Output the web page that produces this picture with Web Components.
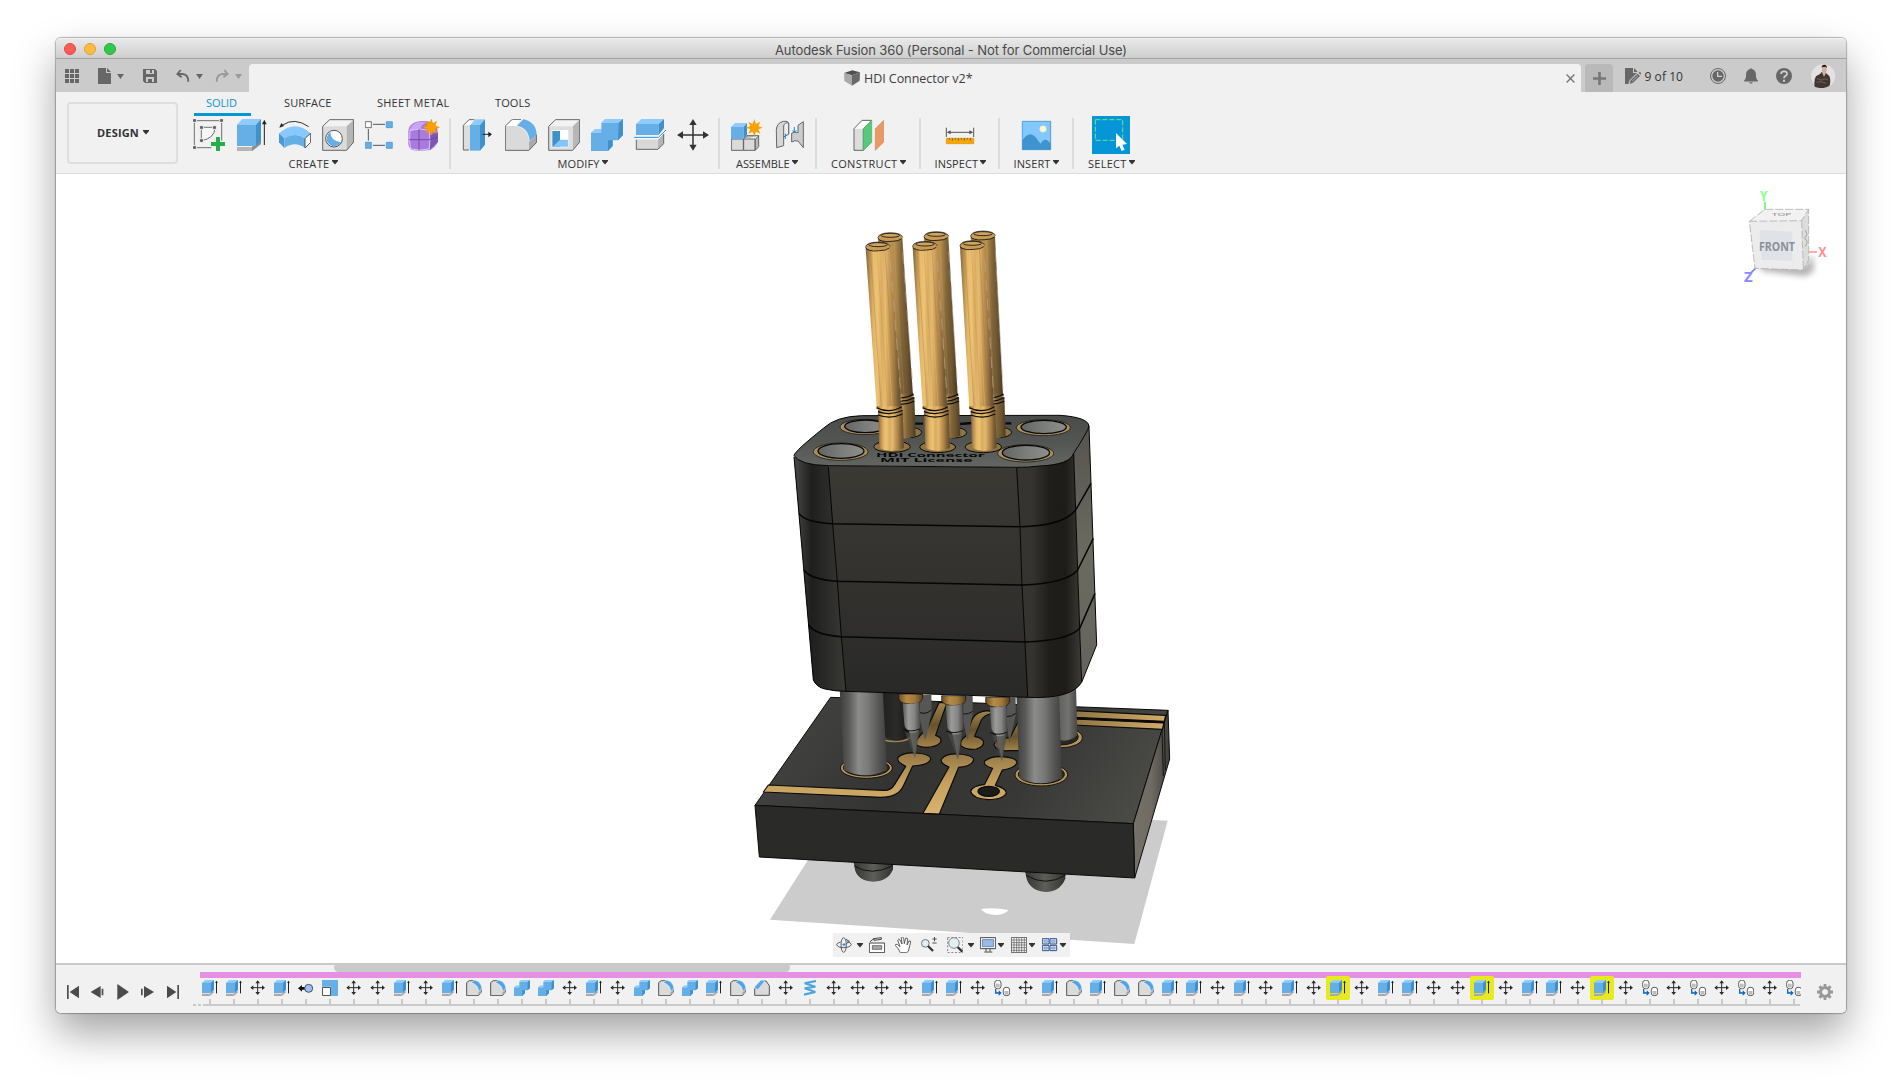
<!DOCTYPE html>
<html lang="en">
<head>
<meta charset="utf-8">
<title>Autodesk Fusion 360</title>
<style>
html,body{margin:0;height:100%;background:#fff;overflow:hidden}
body{font-family:"Open Sans","Noto Sans",sans-serif;font-size:11px;color:#333}
</style>
</head>
<body>
<fusion-app></fusion-app>
<script>
// Each icon: viewBox, width, height, markup.
const G='fill="#676767"', O='stroke="#666" stroke-width="3" stroke-linejoin="round"';
const ICONS={
 caret:['0 0 7 5',7,5,'<path d="M0 0h7L3.5 5z" fill="currentColor"/>'],
 caret6:['0 0 6 5',6,5,'<path d="M0 0h6v1L3 4.500 0 1z" fill="#333"/>'],
 apps:['75 132 42 42',14,14,`<path ${G} d="M75 132h12v12H75zM90 132h12v12H90zM105 132h12v12h-12zM75 147h12v12H75zM90 147h12v12H90zM105 147h12v12h-12zM75 162h12v12H75zM90 162h12v12H90zM105 162h12v12h-12z"/>`],
 file:['174 129 39 48',13,16,`<path ${G} d="M174 129h24v15h15v33h-39zM201 129l12 12h-12z"/>`],
 save:['309 132 42 42',14,14,`<path ${G} fill-rule="evenodd" d="M309 132h36l6 6v36h-36l-6-6zM318 135v12h24v-12h-6v9h-6v-9zM318 156v15h6v-9h12v9h6v-15z"/>`],
 undo:['408 133 42 40',14,13.3,'<path d="M422 136l-10 12 13 10M413 148h14q18 1 18 23" fill="none" stroke="#676767" stroke-width="5.5"/>'],
 redo:['526 133 42 40',14,13.3,'<path d="M554 136l10 12-13 10M563 148h-14q-18 1-18 23" fill="none" stroke="#999" stroke-width="5.5"/>'],
 cube:['162 119 48 48',16,16,'<path d="M162 128l25-8 23 6-24 9z" fill="#4f4f4f"/><path d="M162 128l24 7v31l-23-14z" fill="#aaa"/><path d="M186 135l24-9-1 25-23 15z" fill="#696969"/>'],
 close:['0 0 9 9',9,9,'<path d="M.6.6l7.8 7.8M8.4.6L.6 8.4" stroke="#777" stroke-width="1.400"/>'],
 plus:['0 0 13 13',13,13,'<path d="M6.5 0v13M0 6.5h13" stroke="#777" stroke-width="2.6"/>'],
 docedit:['255 114 48 48',16,16,`<path ${G} d="M255 114h24v15h12l-22 21-4 12h-10zM282 114l11 12h-11zM272 151l21-20 7 7-21 20-10 4zM296 128l4-3 4 5-3 4z"/><path d="M276 154l18-17" stroke="#cbcbcb" stroke-width="2"/>`],
 clock:['510 114 48 48',16,16,`<circle cx="534" cy="138" r="22.5" fill="none" stroke="#676767" stroke-width="3"/><circle cx="534" cy="138" r="17" ${G}/><path d="M533 126v13h13" fill="none" stroke="#d0d0d0" stroke-width="4"/>`],
 bell:['612 113 42 49',14,16,`<path ${G} d="M630 116q3-5 6 0 12 3 12 17 0 14 6 18v3h-42v-3q6-4 6-18 0-14 12-17zM627 157h12q-6 8-12 0z"/>`],
 help:['708 114 48 48',16,16,`<circle cx="732" cy="138" r="24" ${G}/><path d="M723 132q1-9 10-8 9 1 8 8-1 4-5 6-4 2-4 7" fill="none" stroke="#d2d2d2" stroke-width="5"/><path d="M729 149h6v6h-6z" fill="#d2d2d2"/>`],
 avatar:['812 102 73 73',24.3,24.3,'<circle cx="848.500" cy="138.500" r="36" fill="#e2e2e2"/><path d="M823 170q-3-20 4-31l13-8 4-5h12l3 5 8 7q6 16 0 30-21 12-44 2z" fill="#403734"/><path d="M845 126l6 14 6-12v-8h-11z" fill="#c9c2bd"/><path d="M830 146l12 4 12-4 9 4M828 157l14-2 16 5" stroke="#66544c" stroke-width="4" fill="none"/><path d="M845 114q0-6 7-6 7 0 7 6v9q-4 7-7 7-5-1-7-7z" fill="#d8ab93"/><path d="M844 114q-1-9 8-10 8 1 8 9l-5-3-9 1z" fill="#1d1817"/>'],
 sketch:['459 282 96 96',32,32,'<path d="M463 287h82v60M463 287v81h51" fill="none" stroke="#555" stroke-width="2.500"/><path d="M484 307h41q0 33-41 40z" fill="#f6f6f6" stroke="#555" stroke-width="2.500"/><path d="M458 281h11v11h-11zM539 281h11v11h-11zM458 362h11v11h-11zM479 302h11v11h-11zM518 302h11v11h-11zM479 341h11v11h-11z" fill="#555" stroke="#f1f1f1" stroke-width="3"/><path d="M528 336h12v15h15v12h-15v15h-12v-15h-15v-12h15z" fill="#23ad4c"/>'],
 extrude:['588 282 96 96',32,32,'<path d="M591 366h45l27-22v13l-27 21h-45z" fill="#b5b5b5"/><path d="M636 366l27-22v13l-27 21z" fill="#8e8e8e"/><path d="M591 299l16-17h56l-15 17z" fill="#8fcbff"/><path d="M591 299h57v64h-57z" fill="#65aee6"/><path d="M648 299l15-17v66l-15 15z" fill="#4090cc"/><path d="M673 290v70" stroke="#222" stroke-width="3"/><path d="M666 298l7-14 7 14z" fill="#222"/>'],
 revolve:['717 282 96 96',32,32,'<path d="M717 325q48-43 95 0l-17 15q-30-20-62 0z" fill="#87c9ff"/><path d="M717 325l16 15v29l-16-17z" fill="#4b98d2"/><path d="M733 340q32-20 62 0v29q-30-22-62 0z" fill="#65aee6"/><path d="M795 340l17-15v27l-17 17z" fill="#fff" stroke="#555" stroke-width="3"/><path d="M728 300q36-24 78 5" fill="none" stroke="#333" stroke-width="3"/><path d="M718 308l6-14 8 9z" fill="#222"/>'],
 hole:['846 282 96 96',32,32,`<path d="M848 304l21-20h72l-21 20z" fill="#f2f2f2"/><path d="M848 304h72v72h-72z" fill="#dadada"/><path d="M920 304l21-20v67l-21 25z" fill="#b5b5b5"/><path d="M848 304l21-20h72v67l-21 25h-72z" fill="none" ${O}/><circle cx="882" cy="341" r="25" fill="#fff" stroke="#555" stroke-width="3"/><path d="M871 321q0 26 32 31a23 23 0 1 1-32-31z" fill="#65aee6"/>`],
 pattern:['975 282 96 96',32,32,'<path d="M999 298h36M985 312v35M999 361h36" stroke="#555" stroke-width="3"/><path d="M976 290h18v18h-18z" fill="#fff" stroke="#555" stroke-width="2.500"/><path d="M1039 290h18v18h-18zM976 352h18v18h-18zM1039 352h18v18h-18z" fill="#65b0ea" stroke="#3e8dc8" stroke-width="2"/>'],
 form:['1104 282 96 96',32,32,'<path d="M1105 318q0-16 20-26 24-8 50 0 18 12 18 28v32q-6 14-22 23-34 5-56 0-10-8-10-20z" fill="#a97be0"/><path d="M1108 318q4-20 26-27l30 1q-20 5-22 18z" fill="#c9a5f5"/><path d="M1168 330l26-8v28l-24 24z" fill="#7d55b5"/><path d="M1110 316q28-8 58 0 3 30 0 56-28 6-56 0-6-26-2-56z" fill="none" stroke="#dcc4fa" stroke-width="3"/><path d="M1137 313v62M1107 344h60l26-8" fill="none" stroke="#68438f" stroke-width="2.500"/><path d="M1174 283l4 13 12-7-5 13 13 5-13 5 5 13-12-6-4 12-5-12-12 6 5-13-13-5 13-5-5-13 12 6z" fill="#faa100" stroke="#e58c00" stroke-width="1.500"/>'],
 press:['66 102 96 96',32,32,`<path d="M70 121l17-17h20v90H70z" fill="#ddd"/><path d="M70 121l17-17h18l-14 17z" fill="#fafafa"/><path d="M87 195H70v-74l17-17h16" fill="none" ${O}/><path d="M91 120l15-17h29l-15 17z" fill="#8fcbff"/><path d="M90 120h30v77H90z" fill="#65aee6"/><path d="M120 120l15-17v76l-15 18z" fill="#4090cc"/><path d="M128 148h20" stroke="#222" stroke-width="3"/><path d="M145 140l11 8-11 9z" fill="#222"/>`],
 fillet:['195 102 96 96',32,32,`<path d="M196 123l21-20h26l-16 20z" fill="#fff"/><path d="M196 123h30q39 8 41 48v25h-71z" fill="#dadada"/><path d="M267 170l23-21v23l-23 24z" fill="#aaa"/><path d="M196 123l21-20h26M290 149v23l-23 24h-71v-73" fill="none" ${O}/><path d="M231 122l19-19q39 8 40 47l-21 18q-3-39-38-46z" fill="#65aee6"/>`],
 shell:['324 102 96 96',32,32,`<path d="M326 124l21-20h72v67l-21 25h-72z" fill="#f3f3f3"/><path d="M398 124l21-20v67l-21 25z" fill="#b7b7b7"/><path d="M326 124h72v72h-72z" fill="#ddd"/><path d="M335 135h50v52h-50z" fill="#fff"/><path d="M337 138h23v47h-23z" fill="#4090cc"/><path d="M360 164h24v21h-46z" fill="#82c6ff"/><path d="M326 124l21-20h72v67l-21 25h-72z" fill="none" ${O}/>`],
 combine:['453 102 96 96',32,32,'<path d="M484 114l12-12h53v48l-15 16h-16v17l-14 15h-51v-54l13-12h18z" fill="#65aee6"/><path d="M484 114l12-12h53l-13 12zM453 144l13-12h18v12z" fill="#8fcbff"/><path d="M536 114l13-12v48l-15 16zM504 166h14v17l-14 15z" fill="#4090cc"/>'],
 split:['582 102 96 96',32,32,`<path d="M588 117l16-15h68l-16 15z" fill="#8fcbff"/><path d="M588 117h68v33h-68z" fill="#65aee6"/><path d="M656 117l16-15v27l-16 21z" fill="#4090cc"/><path d="M589 164h65v29h-65z" fill="#d8d8d8"/><path d="M654 164l17-20v32l-17 17z" fill="#b5b5b5"/><path d="M589 164v29h65l17-17v-32" fill="none" ${O}/><path d="M582 157h73l23-22" fill="none" stroke="#fff" stroke-width="7"/><path d="M582 157h73l23-22" fill="none" stroke="#1790e8" stroke-width="3"/>`],
 move:['711 102 96 96',32,32,'<path d="M759 114v72M722 150h74" stroke="#333" stroke-width="4.500"/><path d="M759 102l11 18h-22zM759 197l11-18h-22zM711 150l18-11v22zM807 150l-18-11v22z" fill="#333"/>'],
 assemble:['873 102 96 96',32,32,`<path d="M874 162h36v34h-36zM911 162h34v34h-34z" fill="#dadada" ${O}/><path d="M911 162l10-10h35l-10 11v33l10-11v-33" fill="#bbb" ${O}/><path d="M873 126l12-12h36l-10 12z" fill="#8fcbff"/><path d="M873 126h38v36h-38z" fill="#65aee6"/><path d="M911 126l10-12v36l-10 12z" fill="#4090cc"/><path d="M943 102l5 15 13-7-6 13 13 5-13 5 6 13-13-6-5 13-5-13-13 6 6-13-13-5 13-5-6-13 13 7z" fill="#faa100"/>`],
 joint:['1002 102 96 96',32,32,`<path d="M1009 136q0-22 21-27 14-2 16 5v33l-15 9v26l-21 6z" fill="#d6d6d6" ${O}/><path d="M1031 156v-33q3-12 15-9v33z" fill="#eee" ${O}/><path d="M1036 146v16" stroke="#1790e8" stroke-width="3"/><path d="M1055 145q8-7 19-2v-22l16-11v78l-16-20q-9-3-19 3z" fill="#ccc" ${O}/><path d="M1063 126v18M1058 136l5 8 5-8" fill="none" stroke="#1790e8" stroke-width="3"/>`],
 construct:['186 264 96 96',32,32,`<path d="M192 293l24-25h28l-24 25v65h-28z" fill="#ddd" ${O}/><path d="M194 293l23-23h24l-22 23z" fill="#fff"/><path d="M220 293l25-25v66l-25 25z" fill="#5ac87c" stroke="#46b268" stroke-width="2"/><path d="M256 293l25-25v65l-25 25z" fill="#e79a66" stroke="#d6854c" stroke-width="2"/>`],
 inspect:['462 264 96 96',32,32,'<path d="M469 290v28M551 290v28M475 304h70" stroke="#555" stroke-width="3"/><path d="M470 304l12-6v12zM550 304l-12-6v12z" fill="#555"/><path d="M469 322h82v16h-82z" fill="#faa500" stroke="#e18c00" stroke-width="2"/><path d="M478 321v5M487 321v8M496 321v5M505 321v8M514 321v5M523 321v8M532 321v5M541 321v8" stroke="#555" stroke-width="2.500"/>'],
 insert:['690 264 96 96',32,32,'<path d="M697 271h85v85h-85z" fill="#82c8ff" stroke="#3f94d0" stroke-width="2.500"/><path d="M697 328q25-38 48 2l7 8q13-24 30 0v18h-85z" fill="#3f94d0"/><circle cx="759" cy="294" r="10" fill="#fffbd0" stroke="#e5d8a0" stroke-width="1.500"/>'],
 select:['906 258 114 114',38,38,'<path d="M906 258h114v114H906z" fill="#0696d7"/><path d="M916 269h82v62h-82z" fill="none" stroke="#6fe389" stroke-width="3" stroke-dasharray="15 6"/><path d="M978 309v46l10-8 7 16 9-4-7-15 14-2z" fill="#fff"/>'],
 start:['81 90 36 42',12,14,'<path d="M81 90h5v42h-5zM117 92v38l-28-19z" fill="#4b4b4b"/>'],
 prev:['154 90 39 42',13,14,'<path d="M183 93v36l-30-18zM186 101h5v20h-5z" fill="#4b4b4b"/>'],
 play:['230 87 37 48',12.3,16,'<path d="M231 87v48l35-24z" fill="#4b4b4b"/>'],
 next:['303 90 39 42',13,14,'<path d="M312 93v36l30-18zM303 101h5v20h-5z" fill="#4b4b4b"/>'],
 end:['381 90 36 42',12,14,'<path d="M412 90h5v42h-5zM381 92v38l28-19z" fill="#4b4b4b"/>'],
 gear:['0 0 16 16',16,16,'<path fill="#999" fill-rule="evenodd" d="M6.6 0h2.800v2.200l1.600.6 1.600-1.500 2 2-1.500 1.600.7 1.700H16v2.800h-2.200l-.7 1.700 1.500 1.600-2 2-1.600-1.500-1.600.6V16H6.600v-2.200L5 13.200l-1.600 1.500-2-2 1.500-1.600-.7-1.700H0V6.600h2.200l.7-1.700-1.500-1.600 2-2L5 2.800l1.600-.6zM8 5a3 3 0 1 0 .01 0z"/>'],
 // Timeline features, 16px.
 E:['486 75 48 48',16,16,'<path d="M486 116h24l11-9v6l-12 10h-23z" fill="#aaa"/><path d="M486 84l9-9h27l-8 9z" fill="#90ceff"/><path d="M486 83h28v31h-28z" fill="#65aee6"/><path d="M513 83l9-8v30l-9 9z" fill="#3f8fcb"/><path d="M529.500 80v35" stroke="#222" stroke-width="3"/><path d="M525 83l4.500-6 4.500 6z" fill="#222"/>'],
 M:['630 75 48 48',16,16,'<path d="M653 80v36M635 98h36" stroke="#2a2a2a" stroke-width="3"/><path d="M653 76l7 9h-14zM653 120l7-9h-14zM631 98l9-7v14zM675 98l-9-7v14z" fill="#2a2a2a"/>'],
 A:['774 76 48 48',16,16,'<path d="M774 101l12-10v6h10v8h-10v6z" fill="#111"/><circle cx="806" cy="101" r="12" fill="#9fc0ea" stroke="#3e4d7c" stroke-width="3"/>'],
 S:['846 75 48 48',16,16,'<path d="M846 75h48v48h-21V95h-27z" fill="#65b0e8"/><path d="M847.500 97.500h24v24h-24z" fill="#fff" stroke="#555" stroke-width="3"/>'],
 F:['1278 75 48 48',16,16,'<path d="M1280 83l8-6h15q20 6 21 24v10l-9 11h-35z" fill="#dadada" stroke="#555" stroke-width="3"/><path d="M1315 108l9-7v10l-9 10z" fill="#aaa"/><path d="M1293 83l10-8q21 4 23 26l-10 9q-2-22-23-27z" fill="#4fa5e4" stroke="#fff" stroke-width="2"/>'],
 H:['762 75 48 48',16,16,'<path d="M764 102l20-24h14l10 14v29h-44z" fill="#dadada" stroke="#555" stroke-width="3" stroke-linejoin="round"/><path d="M763 96l20-21 12 3-22 27z" fill="#55a9e8" stroke="#fff" stroke-width="1.500"/>'],
 C:['42 75 48 48',16,16,'<path d="M58 81l6-6h26v24l-7 7h-8v8l-8 9H42V98l6-6h10z" fill="#65aee6"/><path d="M58 81l6-6h26l-6 6zM42 98l6-6h10v6z" fill="#90ceff"/><path d="M83 81l7-6v24l-7 7zM67 106h8v8l-8 9z" fill="#3f8fcb"/>'],
 W:['906 75 48 48',16,16,'<path d="M948 78l-34 7 32 10-32 5 32 11-34 8" fill="none" stroke="#4da5e0" stroke-width="6.500" stroke-linejoin="bevel"/>'],
 J:['102 75 48 48',16,16,'<rect x="104" y="76" width="19" height="25" rx="8" fill="#fff" stroke="#444" stroke-width="2.500"/><path d="M108 86h11v11h-11z" fill="#bbb"/><rect x="130" y="97" width="19" height="25" rx="8" fill="#fff" stroke="#444" stroke-width="2.500"/><path d="M134 108h11v11h-11z" fill="#bbb"/><path d="M107 102v12h10" fill="none" stroke="#0a63bd" stroke-width="4"/><path d="M116 106l9 8-9 8z" fill="#0a63bd"/>'],
 // Navigation bar.
 orbit:['288 831 48 48',16,16,'<ellipse cx="311" cy="855" rx="8" ry="22" fill="none" stroke="#444" stroke-width="2.500"/><path d="M302 846q-12 3-12 8 3 9 21 9 20-1 23-9-1-6-12-9" fill="none" stroke="#444" stroke-width="2.500"/><path d="M318 838l10 6-9 7" fill="none" stroke="#444" stroke-width="3"/><path d="M307 854h10M312 849v10" stroke="#1283e8" stroke-width="3"/>'],
 look:['387 831 48 48',16,16,'<path d="M388 849h46v29h-46z" fill="#fff" stroke="#444" stroke-width="3"/><path d="M397 857h28v11h-28z" fill="#aaa" stroke="#444" stroke-width="2"/><path d="M390 845l12-9v5l22-3v-5l-24 3" fill="none" stroke="#444" stroke-width="3"/>'],
 pan:['465 831 48 48',16,16,'<path d="M481 878q-5-12-15-22 0-6 7-2l7 6-7-20q3-6 7 0l6 12-2-19q4-5 7 1l2 17 4-16q5-3 6 2l-2 18 6-12q5-2 5 3l-7 28-5 4z" fill="#fff" stroke="#444" stroke-width="2.500" stroke-linejoin="round"/>'],
 zoom:['543 831 48 48',16,16,'<circle cx="556" cy="850" r="11.500" fill="#dff0f4" stroke="#777" stroke-width="3"/><path d="M564 858l15 15" stroke="#333" stroke-width="7"/><path d="M577 837h13M583.500 831v13M577 849h13" stroke="#333" stroke-width="2.500"/>'],
 fit:['620 831 50 48',16.6,16,'<path d="M622 832h46v46h-46z" fill="none" stroke="#666" stroke-width="2.500" stroke-dasharray="6 5"/><circle cx="641" cy="849" r="16" fill="#dff0f4" stroke="#888" stroke-width="3"/><path d="M652 861l14 14" stroke="#333" stroke-width="7"/>'],
 display:['720 831 48 48',16,16,'<path d="M721 833h46v33h-46z" fill="#fff" stroke="#444" stroke-width="3"/><path d="M727 839h34v21h-34z" fill="#9bbbe4" stroke="#39629b" stroke-width="2"/><path d="M738 867v7M750 867v7M733 876h24" stroke="#444" stroke-width="3"/>'],
 grid:['813 831 48 48',16,16,'<path d="M814 832h46v46h-46z" fill="#f8f8f8" stroke="#444" stroke-width="2.500"/><path d="M822 832v46M830 832v46M837 832v46M845 832v46M853 832v46M814 840h46M814 848h46M814 855h46M814 863h46M814 871h46" stroke="#555" stroke-width="2"/>'],
 views:['906 831 48 48',16,16,'<path d="M907 836h20v16h-20zM930 836h20v16h-20zM907 856h20v16h-20zM930 856h20v16h-20z" fill="#d6e5f8" stroke="#33568c" stroke-width="3"/><path d="M912 841h10v6h-10zM935 841h10v6h-10zM912 861h10v6h-10zM935 861h10v6h-10z" fill="#b3cdec" stroke="#7193bf" stroke-width="2"/>']
};
const define=(n,html,after)=>customElements.define(n,class extends HTMLElement{
 connectedCallback(){ if(this.shadowRoot)return;
  this.attachShadow({mode:'open'}).innerHTML=typeof html==='function'?html(this):html; after&&after(this);}
});
define('f-icon',el=>{const [vb,w,h,m]=ICONS[el.getAttribute('n')];
 return `<style>:host{display:block;flex:none;width:${w}px;height:${h}px}svg{display:block}</style><svg width="${w}" height="${h}" viewBox="${vb}">${m}</svg>`});
// Text whose tracking is adjusted to a given run width.
define('fit-text','<style>:host{display:block;white-space:nowrap;flex:none}span{display:inline-block}</style><span><slot></slot></span>',el=>{
 const s=el.shadowRoot.querySelector('span'),w=+el.getAttribute('w'),n=el.textContent.length;
 s.style.letterSpacing=((w-s.getBoundingClientRect().width)/n).toFixed(3)+'px'; el.style.width=w+'px';});

define('title-bar',`<style>:host{display:flex;height:21px;box-sizing:border-box;align-items:center;background:linear-gradient(#e8e8e8,#cfcfcf);border-top:1px solid #f3f3f3;border-bottom:1px solid #a2a2a2;font:13px Inter,sans-serif;color:#484848;border-radius:5px 5px 0 0}
.l{display:flex;gap:8px;padding-left:8px;width:711px}i{width:12px;height:12px;border-radius:50%;box-sizing:border-box;border:1px solid}fit-text{padding-top:2px}</style>
<div class="l"><i style="background:#fc5b57;border-color:#e2463f"></i><i style="background:#fdbc40;border-color:#e0a033"></i><i style="background:#34c84a;border-color:#27a934"></i></div>
<fit-text w="352">Autodesk Fusion 360 (Personal - Not for Commercial Use)</fit-text>`);

define('tab-bar',`<style>:host{display:flex;height:33px;background:#cbcbcb;align-items:flex-end}
.l{display:flex;width:193px;height:32px;align-items:center;color:#676767;box-sizing:border-box;padding:0 0 0 9px}
.t{height:28px;width:1332px;background:#f1f1f1;border-radius:4px 4px 0 0;display:flex;align-items:center;box-sizing:border-box;padding:0 6px 0 595px;font-size:12.500px;color:#3c3c3c}
.p{height:28px;width:28px;margin-left:4px;background:#b9b9b9;border-radius:4px 4px 0 0;display:grid;place-items:center}
.r{display:flex;height:32px;align-items:center;margin-left:12px;font-size:12px;padding-bottom:0}</style>
<div class="l"><f-icon n="apps"></f-icon><f-icon n="file" style="margin-left:19px"></f-icon><f-icon n="caret" style="margin-left:6px"></f-icon><f-icon n="save" style="margin-left:19px"></f-icon><f-icon n="undo" style="margin-left:19px"></f-icon><f-icon n="caret" style="margin-left:6px"></f-icon><f-icon n="redo" style="margin-left:12px"></f-icon><f-icon n="caret" style="margin-left:6px;color:#999"></f-icon></div>
<div class="t"><f-icon n="cube"></f-icon><fit-text w="108.500" style="margin-left:4px">HDI Connector v2*</fit-text><f-icon n="close" style="margin-left:auto"></f-icon></div>
<div class="p"><f-icon n="plus"></f-icon></div>
<div class="r"><f-icon n="docedit"></f-icon><fit-text w="38.500" style="margin-left:3.500px">9 of 10</fit-text><f-icon n="clock" style="margin-left:27px"></f-icon><f-icon n="bell" style="margin-left:18px"></f-icon><f-icon n="help" style="margin-left:18px"></f-icon><f-icon n="avatar" style="margin-left:18.600px"></f-icon></div>`);

define('tool-group',el=>{const g=k=>el.getAttribute(k);
 return `<style>:host{display:flex;flex-direction:column;flex:none;width:${g('w')}px;height:57px;box-sizing:border-box}
 :host(:not([last])){background:linear-gradient(#dcdcdc,#dcdcdc) right 2px/2px 51px no-repeat}
 .i{display:flex;height:38px;align-items:center;gap:11px;padding-left:${g('i')}px}
 .n{display:flex;height:19px;align-items:center;padding-left:${g('t')}px;color:#333}</style>
 <div class="i">${g('icons').split(' ').map(n=>`<f-icon n="${n}"></f-icon>`).join('')}</div>
 <div class="n"><fit-text w="${g('tw')}">${g('name')}</fit-text><f-icon n="caret6" style="margin:-2px 0 0 2px"></f-icon></div>`});

define('tool-ribbon',`<style>:host{display:flex;height:82px;box-sizing:border-box;background:#f1f1f1;border-bottom:1px solid #dcdcdc}
.d{width:111px;height:62px;box-sizing:border-box;margin:10px 0 0 11px;border:2px solid #dedede;border-radius:4px;display:flex;align-items:center;padding:0 0 2px 28px;font-weight:700}
.c{padding-left:5px}.tabs{display:flex;height:24px;padding-left:11px}
.tabs div{height:24px;box-sizing:border-box;padding:3px 0 0 12px}.tabs .on{color:#0696d7;width:57px;border-bottom:3px solid #0696d7}
.g{display:flex}</style>
<div class="d"><fit-text w="42">DESIGN</fit-text><f-icon n="caret6" style="margin-left:4px"></f-icon></div>
<div class="c"><div class="tabs"><div class="on"><fit-text w="31">SOLID</fit-text></div><div style="padding-left:33px"><fit-text w="47.500">SURFACE</fit-text></div><div style="padding-left:45.500px"><fit-text w="72.500">SHEET METAL</fit-text></div><div style="padding-left:45.500px"><fit-text w="35.500">TOOLS</fit-text></div></div>
<div class="g">
<tool-group w="268" i="10" t="105.500" tw="41" name="CREATE" icons="sketch extrude revolve hole pattern form"></tool-group>
<tool-group w="269" i="11" t="106.500" tw="42" name="MODIFY" icons="press fillet shell combine split move"></tool-group>
<tool-group w="97" i="11" t="16" tw="53.500" name="ASSEMBLE" icons="assemble joint"></tool-group>
<tool-group w="104" i="35" t="14" tw="66.500" name="CONSTRUCT" icons="construct"></tool-group>
<tool-group w="79" i="23" t="13.500" tw="43.500" name="INSPECT" icons="inspect"></tool-group>
<tool-group w="74" i="20" t="13.500" tw="37" name="INSERT" icons="insert"></tool-group>
<tool-group last w="74" i="18" t="14" tw="38.500" name="SELECT" icons="select"></tool-group></div></div>`);

define('nav-bar',`<style>:host{display:flex;align-items:center;box-sizing:border-box;width:237px;height:24px;padding-left:3px;background:#f1f1f1;color:#333}</style>
<f-icon n="orbit"></f-icon><f-icon n="caret6" style="margin-left:5px"></f-icon><f-icon n="look" style="margin-left:6px"></f-icon><f-icon n="pan" style="margin-left:10px"></f-icon><f-icon n="zoom" style="margin-left:10px"></f-icon><f-icon n="fit" style="margin-left:9.700px"></f-icon><f-icon n="caret6" style="margin-left:4.700px"></f-icon><f-icon n="display" style="margin-left:6px"></f-icon><f-icon n="caret6" style="margin-left:2px"></f-icon><f-icon n="grid" style="margin-left:7px"></f-icon><f-icon n="caret6" style="margin-left:2px"></f-icon><f-icon n="views" style="margin-left:7px"></f-icon><f-icon n="caret6" style="margin-left:2px"></f-icon>`);

// Pogo pin barrel with neck rings and base.
const barrel=(x,y,bx,ny,by,f)=>`<path d="M${x} ${y}l${bx-x} ${ny-y}h74L${x+73} ${y-4}z" fill="url(#${f})"/>
${[[14,.5,'#a97d40'],[22,.5,'#f2cb82'],[34,.45,'#c2924c'],[47,.4,'#efc67a'],[58,.45,'#9d753c']].map(([o,a,c])=>`<path d="M${x+o} ${y+6}L${bx+o} ${ny}M${bx+o+4} ${ny+30}V${by-4}" stroke="${c}" stroke-width="2.500" opacity="${f==='gold'?a:a*.4}"/>`).join('')}
<path d="M${bx+4} ${ny+6}h74l4 ${by-ny-14}q-38 18-74 0z" fill="url(#${f})"/>
<path d="M${bx} ${ny-4}v8q38 14 76 0v-8z" fill="url(#${f})"/>
<ellipse cx="${x+37}" cy="${y-6}" rx="37" ry="12" fill="#c89b55"/><path d="M${x} ${y-4}q1 9 12 10l12 2 18-1q20 0 29-8" fill="none" stroke="#111" stroke-width="2.500"/><path d="M${x} ${y-4}q2-14 37-15 34 1 37 14" fill="none" stroke="#222" stroke-width="2"/><ellipse cx="${x+37}" cy="${y-11}" rx="28" ry="6" fill="#cfa35c" stroke="#111" stroke-width="2.500"/>
<path d="M${bx} ${ny}q38 19 75-3M${bx+4} ${ny+12}q38 14 74-4M${bx+3} ${ny+22}q38 14 75-3" fill="none" stroke="#0b0b08" stroke-width="3.500"/>
<path d="M${x+74} ${y+40}L${bx+74} ${ny-20}" stroke="#b5afa2" stroke-width="1.800" stroke-dasharray="34 24" fill="none"/>`;
const probe=(x,t)=>`<path d="M${x-36} ${t}h72v14q-6 12-14 13-22 7-44 0-10-3-14-12z" fill="url(#gold2)" stroke="#111" stroke-width="2"/>
<path d="M${x-24} ${t+28}q26 5 50-4l3 70q-2 8-5 14l-11 82-18-80q-14-8-14-20z" fill="url(#steel)"/><path d="M${x-17} ${t+114}q24 6 44-2l-14 80z" fill="#4b4b48" opacity=".7"/><path d="M${x-23} ${t+106}q24 10 50-1" fill="none" stroke="#111" stroke-width="3"/>`;
const col=(x1,x2,y1,y2,dx,g)=>`<path d="M${x1} ${y1}L${x1+dx} ${y2-12}q${(x2-x1)/2} 32 ${x2-x1} 0L${x2} ${y1}z" fill="url(#${g})"/>`;
const ring=(x,y,rx,ry)=>`<ellipse cx="${x}" cy="${y}" rx="${rx}" ry="${ry}" fill="#aa8f5c" stroke="#1a1a18" stroke-width="2.500"/><ellipse cx="${x+1}" cy="${y-2}" rx="${rx-13}" ry="${ry-4}" fill="url(#disc)" stroke="#080808" stroke-width="4"/>`;
const lin=(id,v,...s)=>`<linearGradient id="${id}" ${v?'x2="0" y2="1"':''}>${s.map((c,i)=>`<stop offset="${i/(s.length-1)}" stop-color="${c}"/>`).join('')}</linearGradient>`;
define('model-view',`<style>:host{display:block}svg{display:block}text{font-family:"Open Sans",sans-serif}</style>
<svg width="1790" height="789" viewBox="56 174 1790 789"><defs>
${lin('gold',0,'#7d6136','#b98f51','#e3b768','#edc273','#d9ac62','#e3b96e','#c69a54','#a98048','#7b6036','#5e4a2b')}
${lin('goldr',0,'#a27a43','#b88f4f','#bd9350','#b18a4b','#80653a','#6c5430','#4b3b22')}
${lin('gold2',0,'#6b5027','#b78b45','#a07a3c','#57411f')}
${lin('steel',0,'#5a5b59','#9b9c99','#858683','#484946')}
${lin('col',0,'#3d3e3c','#5b5c5a','#8b8c89','#7a7b78','#5a5b58','#3f403d')}
${lin('cold',0,'#20201f','#2b2b2a','#151514')}
${lin('colr',0,'#3a3b39','#60615e','#737471','#454643')}
${lin('disc',0,'#636563','#7b7d7a','#8d8f8b')}
${lin('topf',1,'#4a4c4a','#535553','#646662')}
${lin('front',1,'#3b3a35','#33322f','#292928')}
${lin('cl',0,'#4a4a47','#1f1f1e','#2c2c2a','#3a3935')}
${lin('cr',0,'#363532','#34332f','#1f1e1b','#1d1c19','#3c3b35')}
${lin('side',1,'#56544d','#6b6a61','#65645c')}
${lin('bside',0,'#76726a','#6f6b63','#3f3e38')}
<linearGradient id="btop" x1="0" x2="1" y1=".3" y2=".5"><stop stop-color="#454644"/><stop offset=".4" stop-color="#333431"/><stop offset=".7" stop-color="#383936"/><stop offset="1" stop-color="#4a4b47"/></linearGradient>
${lin('trace',1,'#a48549','#66522c','#a48549')}
<linearGradient id="tb" gradientUnits="userSpaceOnUse" x1="0" x2="0" y1="270" y2="460"><stop stop-color="#8f7443"/><stop offset=".5" stop-color="#c4a05f"/><stop offset="1" stop-color="#d9b36d"/></linearGradient>
${lin('te',0,'#8f7443','#d3ad69')}
${lin('dome',0,'#343532','#5d5e5a','#33332f')}
<filter id="bl" x="-.3" y="-.6" width="1.600" height="2.200"><feGaussianBlur stdDeviation="10"/></filter><filter id="soft"><feGaussianBlur stdDeviation="1.500"/></filter></defs>
<g transform="translate(740 660) scale(.33333)" stroke-linejoin="round">
 <path d="M210 590L90 779l1093 73 100-370-100-5z" fill="#ccc" filter="url(#soft)"/><path d="M723 747q40-6 83 3-12 15-42 15-30-2-41-18z" fill="#fff"/>
 <path d="M340 600l5 30q10 33 55 35 45-1 59-37v-24z" fill="url(#dome)"/><path d="M343 618q50 32 116-1" fill="none" stroke="#111" stroke-width="3"/>
 <path d="M855 632l5 25q12 36 57 39 44-2 59-40v-20z" fill="url(#dome)"/><path d="M858 646q60 36 119-1" fill="none" stroke="#111" stroke-width="3"/>
 <path d="M45 436L272 112l1012 39-104 340z" fill="url(#btop)" stroke="#0a0a0a" stroke-width="3"/>
 <path d="M1284 151l5 146-105 357-4-163z" fill="url(#bside)" stroke="#0a0a0a" stroke-width="3"/><path d="M1266 208l4 140M1273 182l3 148" stroke="#111" stroke-width="3"/>
 <path d="M45 436l1135 55 4 163L58 591z" fill="#2a2a28" stroke="#0a0a0a" stroke-width="3"/>
 <g stroke="#0a0a0a" stroke-width="3.500">
 <path d="M1000 152l277 14-4 18-273-12zM1000 177l272 12-5 19-267-13z" fill="url(#te)"/><path d="M1000 174l274 13" stroke-width="5"/>
 <path d="M597 128h24l-34 98q22 8 14 22-12 14-44 14-30-2-33-14 16-24 38-44z" fill="url(#trace)"/>
 <path d="M745 152q-36 2-48 25l-20 52q-20 14-14 29 20 13 46 9 26-8 21-24-8-11-26-14l20-48q8-18 40-22z" fill="url(#trace)"/>
 <path d="M835 185l-25 48q-45 3-48 22 8 20 46 17h40v-87z" fill="url(#trace)"/>
 <path d="M85 375l345 16q22 2 34-18l33-54q-28-14-23-26 14-16 50-14 46 2 48 18-5 19-54 21l-28 60q-16 34-68 34L70 396z" fill="url(#tb)"/>
 <path d="M549 460l78-139q-29-12-22-24 12-17 50-15 46 4 46 18-5 19-45 22l-58 140z" fill="url(#tb)"/>
 <path d="M758 325q-30-8-24-22 18-14 50-13 48 3 47 19-8 16-44 21l-21 46q30 8 33 22-6 20-54 21-46-3-53-24 4-18 42-22z" fill="url(#tb)"/><ellipse cx="746" cy="394" rx="32" ry="15" fill="#1b1b18"/>
 </g>
 <path d="M430 240q60 14 95-15" fill="none" stroke="#a78750" stroke-width="4"/>
 ${col(426,510,92,238,2,'cold')}
 <ellipse cx="965" cy="233" rx="62" ry="30" fill="#b4935a" stroke="#111" stroke-width="3"/><ellipse cx="963" cy="230" rx="52" ry="25" fill="#272724" stroke="#111" stroke-width="3"/>${col(930,1008,80,238,4,'colr')}
 <path d="M540 105h34l1 52-15 70-6 12-14-60zM670 108h28v52l-16 83-12-60zM800 112h27v54l-19 83-8-60z" fill="#565754"/><path d="M540 158q20 6 34-8M670 162q16 2 28-8M800 170q16 0 27-10" fill="none" stroke="#111" stroke-width="3"/>
 ${probe(512,102)}${probe(641,107)}${probe(773,112)}
 <ellipse cx="379" cy="324" rx="78" ry="31" fill="#b4935a" stroke="#111" stroke-width="3"/><ellipse cx="379" cy="323" rx="69" ry="25" fill="#272724" stroke="#111" stroke-width="3"/>
 <ellipse cx="904" cy="344" rx="79" ry="34" fill="#b4935a" stroke="#111" stroke-width="3"/><ellipse cx="904" cy="343" rx="69" ry="28" fill="#272724" stroke="#111" stroke-width="3"/>
 ${col(299,428,85,342,13,'col')}${col(829,957,95,366,9,'col')}
</g>
<g transform="translate(780 400) scale(.33333)" stroke-linejoin="round">
 <path d="M42 170L100 840q10 22 35 27 30 7 63 7l545 18q130 6 162-45L881 160 710 202l-565-5z" fill="url(#front)"/>
 <path d="M42 170L100 840q14 34 98 34L145 197q-88-4-103-27z" fill="url(#cl)"/>
 <path d="M710 202q130 0 171-42l24 685q-20 49-162 47z" fill="url(#cr)"/>
 <path d="M881 160l46-85 23 660-45 112z" fill="url(#side)"/>
 <path d="M42 166q4-14 88-81 38-36 115-38l595-1q84 6 87 32-2 14-46 82-11 34-101 38-40 5-70 4l-565-5q-88-2-103-31z" fill="url(#topf)"/>
 <g fill="none" stroke="#050505" stroke-width="3"><path d="M42 166q4-14 88-81 38-36 115-38l595-1q84 6 87 32-2 14-46 82-11 34-101 38-40 5-70 4l-565-5q-88-2-103-31z"/>
 <path d="M42 170L100 840q10 22 35 27 30 7 63 7l545 18q130 6 162-45l45-112L927 78M881 160l6 170 6 180 6 175 6 160M145 200l13 171 14 173 12 166 14 164M710 202l10 178 6 175 9 171 8 166"/>
 <path stroke-width="4.500" d="M57 340q16 26 101 31l562 9q130-2 167-50l46-80M72 510q18 28 100 34l554 11q134-5 167-45l47-95M86 675q20 30 98 35l551 16q130-4 164-41l46-105"/></g>
</g>
<g transform="translate(780 220) scale(.33333)">
 ${ring(255,621,75,23)}${ring(790,623,81,24)}${ring(182,695,82,26)}${ring(737,700,84,26)}
 <path d="M405 611h24M540 612l35-3 18 5M676 610h18" stroke="#0a0a0a" stroke-width="7" fill="none"/>
 <g fill="#8f7545" stroke="#0a0a0a" stroke-width="3"><ellipse cx="385" cy="637" rx="40" ry="16"/><ellipse cx="520" cy="638" rx="40" ry="16"/><ellipse cx="655" cy="637" rx="40" ry="16"/></g>
 ${barrel(294,57,325,525,655,'goldr')}${barrel(432,54,459,525,655,'goldr')}${barrel(572,52,595,525,655,'goldr')}
 <g fill="#8f7545" stroke="#0a0a0a" stroke-width="3"><ellipse cx="336" cy="680" rx="55" ry="17"/><ellipse cx="473" cy="681" rx="54" ry="17"/><ellipse cx="610" cy="681" rx="55" ry="17"/></g>
 ${barrel(257,85,290,563,692,'gold')}${barrel(398,83,428,563,692,'gold')}${barrel(540,81,568,563,692,'gold')}
 <g fill="#060606" font-weight="700" font-size="24"><text transform="translate(288 710) scale(1 .75)" textLength="326" lengthAdjust="spacingAndGlyphs">HDI Connector</text><text transform="translate(300 726) scale(1 .68)" textLength="278" lengthAdjust="spacingAndGlyphs">MIT License</text></g>
</g>
<g transform="translate(1540 30) scale(.33333)">
 <path d="M655 700l140 10 22-40 4 54-25 14-130-16z" fill="#777" opacity=".6" filter="url(#bl)"/>
 <path d="M675 515v25" stroke="#7dff7d" stroke-width="6"/><path d="M806 666h25" stroke="#ff9a9a" stroke-width="5"/><path d="M634 727l15-14" stroke="#7f7fff" stroke-width="5"/>
 <path d="M628 574l47-36h131l-21 34z" fill="#f2f2f2"/><path d="M628 574l157-2 5 148-145-5z" fill="#ececec"/><path d="M785 572l21-34v152l-16 30z" fill="#dcdcdc"/>
 <path d="M658 600l99 5v88l-92-4z" fill="#dfe2e6"/>
 <path d="M628 574l47-36h131v152l-16 30-145-5zM628 574l157-2 21-34M785 572l5 148" fill="none" stroke="#b0b0b0" stroke-width="2.500" stroke-dasharray="24 6"/>
 <path d="M796 600l5 14-7 10 8 12-6 14" stroke="#999" stroke-width="2.500" fill="none"/>
 <g font-weight="700"><text x="657" y="664" font-size="38" fill="#8c9098" textLength="108" lengthAdjust="spacingAndGlyphs">FRONT</text>
 <text transform="translate(696 557) scale(1 .32)" font-size="34" font-weight="400" fill="#777" textLength="58" lengthAdjust="spacingAndGlyphs">TOP</text></g>
 <g font-size="45" font-weight="700"><text x="659" y="512" fill="#8dff8d" textLength="24" lengthAdjust="spacingAndGlyphs">Y</text><text x="835" y="681" fill="#ff9090" textLength="25" lengthAdjust="spacingAndGlyphs">X</text><text x="612" y="755" fill="#8a8aff" textLength="26" lengthAdjust="spacingAndGlyphs">Z</text></g>
</g></svg>`);

const SEQ='EEMEASMMEMEFFCCMEMCFCEFHMWMMMMEEMJMEFEFFEEMEMEMEMEEMMEMEEMEMJMJMJMJ';
const HOT=[47,53,58];
define('time-line',`<style>:host{display:flex;height:50px;background:#f1f1f1;border-radius:0 0 5px 5px}
.p{display:flex;align-items:center;width:137px;box-sizing:border-box;padding:14px 0 0 11px}
.t{width:1608px;overflow:hidden;display:flex;flex-direction:column}
.s{height:9px;display:flex}.s i{width:456px;height:9px;margin-left:141px;background:#c9c9c9;border-radius:5px}
.k{height:6px;margin-left:7px;background:#e590e5;flex:none}
.f{display:flex;padding-left:5px;margin-top:-2px;flex:none}
.c{flex:none;width:24px;height:28px;display:flex;flex-direction:column;align-items:center}
.c b{width:24px;height:24px;display:grid;place-items:center;border-radius:2px}.c.h b{background:#e8ea1e}
.c u{width:2px;height:5px;background:#c9c9c9;margin-top:-1px;flex:none}
.z{display:flex;gap:2px;height:2px}.z i{background:#c9c9c9;width:3px}.z i:last-child{flex:1;margin-right:1px}
.wrap{display:flex;flex-direction:column;background:linear-gradient(#c9c9c9,#c9c9c9) 0 0/100% 2px no-repeat;flex:1;border-radius:0 0 5px 5px}
.row{display:flex}</style>
<div class="wrap"><div class="row"><div class="p"><f-icon n="start"></f-icon><f-icon n="prev" style="margin-left:12px"></f-icon><f-icon n="play" style="margin-left:13px"></f-icon><f-icon n="next" style="margin-left:12px"></f-icon><f-icon n="end" style="margin-left:13px"></f-icon></div>
<div class="t"><div class="s"><i></i></div><div class="k"></div><div class="f">${[...SEQ].map((c,i)=>`<div class="c${HOT.includes(i)?' h':''}"><b><f-icon n="${c}"></f-icon></b><u></u></div>`).join('')}</div><div class="z"><i></i><i></i><i></i></div></div>
<f-icon n="gear" style="margin:21px 0 0 16px"></f-icon></div></div>`);

define('fusion-app',`<style>:host{display:block;padding:38px 56px 0;height:1087px;box-sizing:border-box}
.w{width:1790px;height:975px;border-radius:5px;background:#fff;box-shadow:0 0 1px 1px rgba(0,0,0,.28),0 20px 40px rgba(0,0,0,.36);display:flex;flex-direction:column}
.v{position:relative;height:789px}nav-bar{position:absolute;left:777px;top:759px}</style>
<div class="w"><title-bar></title-bar><tab-bar></tab-bar><tool-ribbon></tool-ribbon><div class="v"><model-view></model-view><nav-bar></nav-bar></div><time-line></time-line></div>`);
</script>
</body>
</html>
